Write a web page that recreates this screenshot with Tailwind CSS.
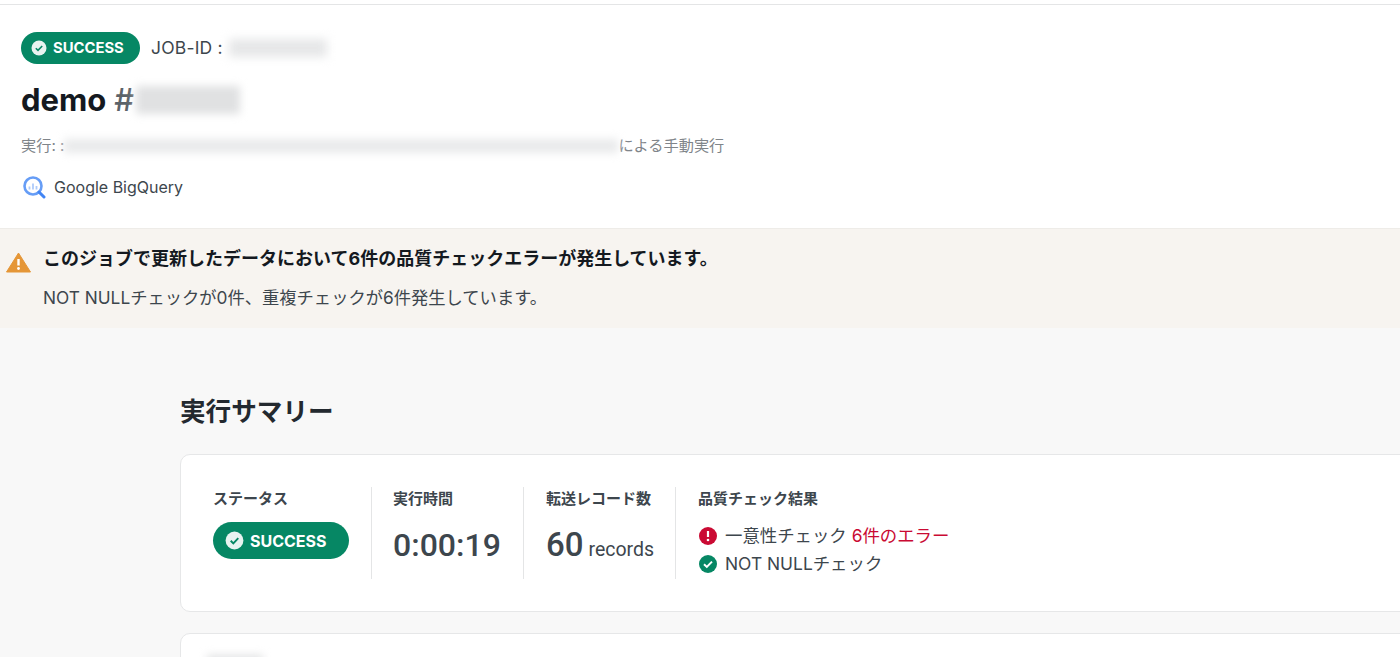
<!DOCTYPE html>
<html lang="ja">
<head>
<meta charset="utf-8">
<script src="https://cdn.jsdelivr.net/npm/@tailwindcss/browser@4"></script>
</head>
<body class="h-[657px] w-[1400px] overflow-hidden bg-[#f8f8f8] font-['Inter','Noto_Sans_CJK_JP',sans-serif] text-[#3d464d]">
<header class="h-[228px] bg-white pt-[4px]">
  <div class="h-[1px] bg-[#e4e5e6]"></div>
  <div class="px-[21px] pt-[27px]">
    <div class="flex h-[32px] items-center">
      <span class="flex h-[32px] w-[119px] items-center gap-[6px] rounded-full bg-[#068764] pl-[10px] text-[14.8px] font-bold text-white">
        <svg class="h-[16px] w-[16px]" viewBox="0 0 16 16"><circle cx="8" cy="8" r="7.5" fill="#e8f3f0"/><path d="M4.8 8.2l2.2 2.2 4.2-4.4" fill="none" stroke="#068764" stroke-width="1.6"/></svg>
        SUCCESS
      </span>
      <span class="ml-[11px] text-[17.5px] tracking-[0.2px]">JOB-ID :</span>
      <div class="ml-[6px] h-[18px] w-[98px] bg-[#e6e7e8] blur-[5px]"></div>
    </div>
    <div class="mt-[18px] flex h-[36px] items-center">
      <h1 class="text-[31px] font-bold text-[#14191f]">demo</h1>
      <span class="ml-[8px] text-[31px] font-medium text-[#5c6369]">#</span>
      <div class="ml-[2px] h-[28px] w-[104px] bg-[#e0e1e2] blur-[4px]"></div>
    </div>
    <div class="mt-[16px] flex h-[24px] items-center text-[15.2px] text-[#80858a]">
      <span>実行: :</span>
      <div class="h-[14px] w-[554px] bg-[#e9eaeb] blur-[4px]"></div>
      <span>による手動実行</span>
    </div>
    <div class="mt-[14px] flex h-[30px] items-center gap-[8px] text-[16px]">
      <svg class="ml-[1px] h-[24px] w-[24px]" viewBox="0 0 24 24">
        <circle cx="11" cy="11" r="8.5" fill="none" stroke="#669df6" stroke-width="2.6"/>
        <path d="M17 17l5 5" stroke="#4285f4" stroke-width="3" stroke-linecap="round"/>
        <path d="M7.5 11.5v3M11 8.5v6M14.5 11v3.5" stroke="#aecbfa" stroke-width="1.8"/>
      </svg>
      <span>Google BigQuery</span>
    </div>
  </div>
</header>
<section class="relative h-[100px] border-t border-[#eeece8] bg-[#f7f4f0] pl-[43px] pt-[17px]">
  <svg class="absolute left-[6px] top-[23px] h-[21px] w-[25px]" viewBox="0 0 25 21"><path d="M12.5 1L24.5 20H0.5Z" fill="#e59637" stroke="#e59637" stroke-linejoin="round"/><path d="M12.5 7v6.5" stroke="#fff" stroke-width="2.4"/><circle cx="12.5" cy="16.5" r="1.4" fill="#fff"/></svg>
  <p class="text-[18px] leading-[26px] font-bold text-[#14191f]">このジョブで更新したデータにおいて6件の品質チェックエラーが発生しています。</p>
  <p class="mt-[13px] text-[17.3px] leading-[26px]">NOT NULLチェックが0件、重複チェックが6件発生しています。</p>
</section>
<main class="h-[329px] overflow-hidden pl-[180px]">
  <h2 class="pt-[65px] text-[25.6px] leading-[38px] font-bold text-[#23292f]">実行サマリー</h2>
  <div class="mt-[23px] flex h-[158px] w-[1300px] items-start rounded-[10px] border border-[#e6e7e8] bg-white pt-[32px]">
    <div class="h-[92px] w-[191px] border-r border-[#e4e5e6] pl-[32px]">
      <div class="text-[15px] leading-[24px] font-bold">ステータス</div>
      <span class="mt-[11px] flex h-[37px] w-[136px] items-center gap-[6px] rounded-full bg-[#068764] pl-[12px] text-[16px] font-bold text-white">
        <svg class="h-[19px] w-[19px]" viewBox="0 0 16 16"><circle cx="8" cy="8" r="7.5" fill="#e8f3f0"/><path d="M4.8 8.2l2.2 2.2 4.2-4.4" fill="none" stroke="#068764" stroke-width="1.6"/></svg>
        SUCCESS
      </span>
    </div>
    <div class="h-[92px] w-[152px] border-r border-[#e4e5e6] pl-[21px] font-['Roboto','Noto_Sans_CJK_JP',sans-serif]">
      <div class="text-[15px] leading-[24px] font-bold">実行時間</div>
      <div class="mt-[12px] text-[32px] leading-[44px] font-medium">0:00:19</div>
    </div>
    <div class="h-[92px] w-[152px] border-r border-[#e4e5e6] pl-[22px] font-['Roboto','Noto_Sans_CJK_JP',sans-serif]">
      <div class="text-[15px] leading-[24px] font-bold">転送レコード数</div>
      <div class="mt-[12px] text-[33px] leading-[44px] font-medium">60<span class="ml-[5px] text-[19.5px] font-normal">records</span></div>
    </div>
    <div class="pl-[22px]">
      <div class="text-[15px] leading-[24px] font-bold">品質チェック結果</div>
      <div class="mt-[11px] flex h-[28px] items-center gap-[8px] pl-[1px] text-[17.4px]">
        <svg class="h-[18px] w-[18px]" viewBox="0 0 18 18"><circle cx="9" cy="9" r="9" fill="#ca0a33"/><path d="M9 4v6" stroke="#fff" stroke-width="2.2"/><circle cx="9" cy="13" r="1.3" fill="#fff"/></svg>
        <span>一意性チェック <span class="text-[#ca0a33]">6件のエラー</span></span>
      </div>
      <div class="flex h-[28px] items-center gap-[8px] pl-[1px] text-[17.4px]">
        <svg class="h-[18px] w-[18px]" viewBox="0 0 18 18"><circle cx="9" cy="9" r="9" fill="#068764"/><path d="M5 9.3l2.8 2.6L13 6.6" fill="none" stroke="#fff" stroke-width="2"/></svg>
        <span>NOT NULLチェック</span>
      </div>
    </div>
  </div>
  <div class="mt-[21px] h-[60px] w-[1300px] rounded-[10px] border border-[#e6e7e8] bg-white pl-[26px] pt-[21px]">
    <div class="h-[10px] w-[56px] bg-[#e2e3e4] blur-[4px]"></div>
  </div>
</main>
</body>
</html>
